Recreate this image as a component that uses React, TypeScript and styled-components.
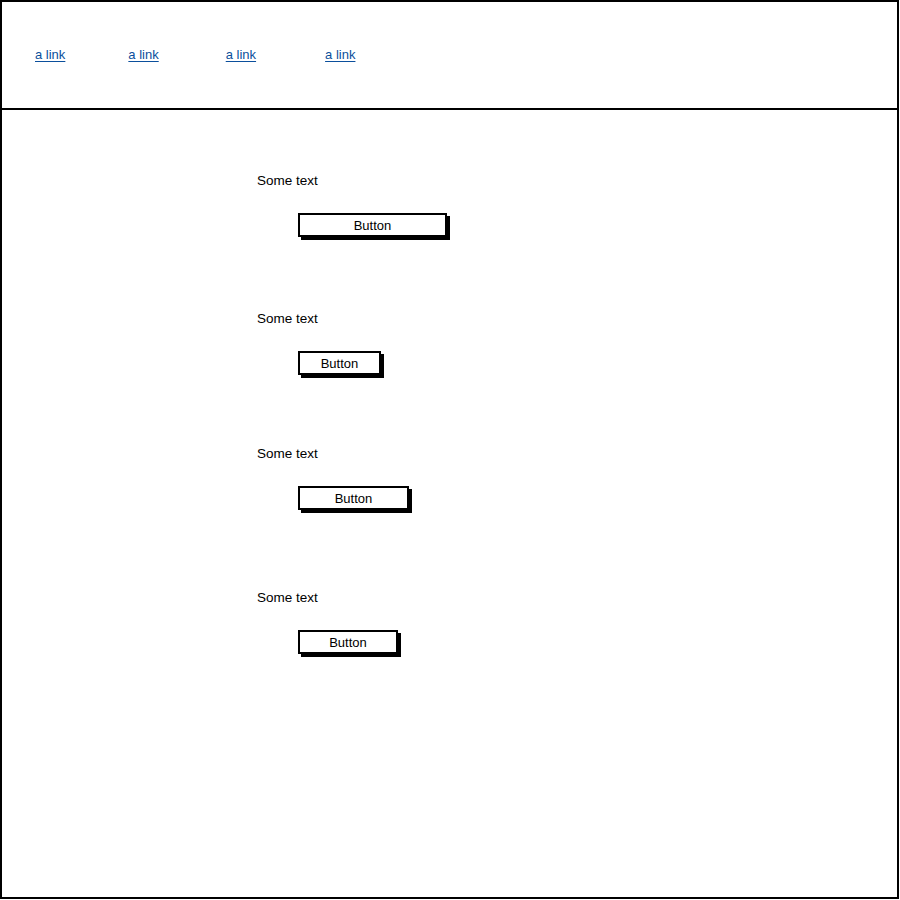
import React from "react";
import styled, { createGlobalStyle } from "styled-components";

const GlobalStyle = createGlobalStyle`
  html, body {
    margin: 0;
    padding: 0;
    background: #ffffff;
  }
  body {
    font-family: "Liberation Sans", Arial, sans-serif;
    font-size: 13px;
    color: #000;
  }
`;

const Frame = styled.div`
  box-sizing: border-box;
  width: 899px;
  height: 899px;
  border: 2px solid #000;
  display: flex;
  flex-direction: column;
  background: #fff;
`;

const Header = styled.nav`
  box-sizing: border-box;
  height: 108px;
  border-bottom: 2px solid #000;
  display: flex;
  align-items: center;
  padding-left: 33px;
  padding-bottom: 1px;
`;

const NavLink = styled.a<{ $offset: number }>`
  margin-left: ${(p) => p.$offset}px;
  color: #0b4f9c;
  text-decoration: underline;
  text-underline-offset: 2px;
  font-size: 13px;
  line-height: 16px;
  cursor: pointer;
`;

const Content = styled.main`
  display: flex;
  flex-direction: column;
  padding: 63px 0 0 255px;
`;

const Section = styled.section<{ $top: number }>`
  display: flex;
  flex-direction: column;
  align-items: flex-start;
  gap: 24px;
  margin-top: ${(p) => p.$top}px;
`;

const Label = styled.p`
  margin: 0;
  font-size: 13.5px;
  line-height: 16px;
`;

const Button = styled.button<{ $width: number }>`
  box-sizing: border-box;
  margin-left: 41px;
  width: ${(p) => p.$width}px;
  height: 24px;
  border: 2px solid #000;
  background: #fff;
  box-shadow: 3px 3px 0 #000;
  font-family: "Liberation Sans", Arial, sans-serif;
  font-size: 13px;
  color: #000;
  padding: 0;
  cursor: pointer;
`;

const links = [0, 63, 67, 69];
const sections = [
  { top: 0, width: 149 },
  { top: 74, width: 83 },
  { top: 71, width: 111 },
  { top: 80, width: 100 },
];

export default function App() {
  return (
    <>
      <GlobalStyle />
      <Frame>
        <Header>
          {links.map((o, i) => (
            <NavLink key={i} $offset={o}>
              a link
            </NavLink>
          ))}
        </Header>
        <Content>
          {sections.map((s, i) => (
            <Section key={i} $top={s.top}>
              <Label>Some text</Label>
              <Button $width={s.width}>Button</Button>
            </Section>
          ))}
        </Content>
      </Frame>
    </>
  );
}
